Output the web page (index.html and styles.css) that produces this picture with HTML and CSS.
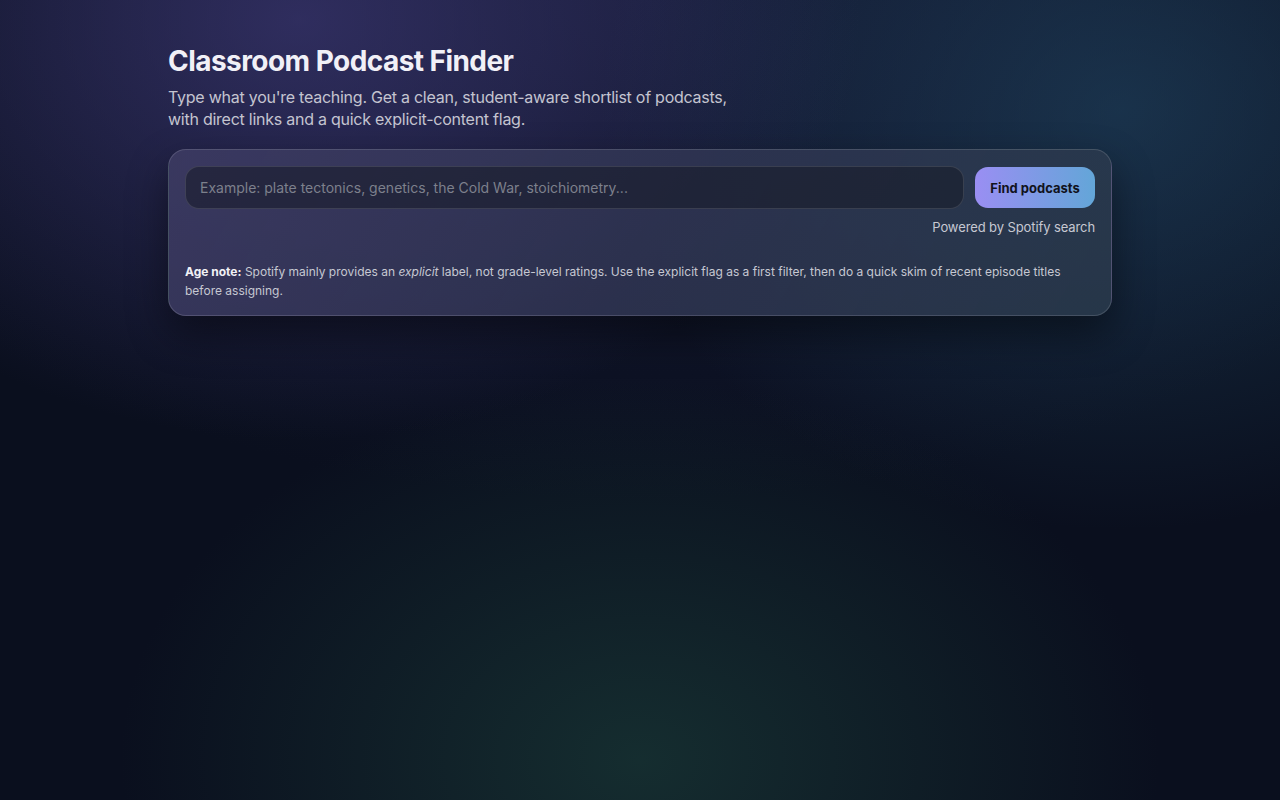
FILE: index.html
```html
<!DOCTYPE html>
<html lang="en">
<head>
<meta charset="utf-8">
<title>Classroom Podcast Finder</title>
<link rel="stylesheet" href="styles.css">
</head>
<body>
<main class="wrap">
  <header class="head">
    <h1 class="title">Classroom Podcast Finder</h1>
    <p class="sub">Type what you're teaching. Get a clean, student-aware shortlist of podcasts, with direct links and a quick explicit-content flag.</p>
  </header>
  <section class="card">
    <form class="row" onsubmit="return false">
      <input class="input" type="text" placeholder="Example: plate tectonics, genetics, the Cold War, stoichiometry...">
      <button class="btn" type="submit">Find podcasts</button>
    </form>
    <div class="powered">Powered by Spotify search</div>
    <p class="note"><strong>Age note:</strong> Spotify mainly provides an <em>explicit</em> label, not grade-level ratings. Use the explicit flag as a first filter, then do a quick skim of recent episode titles before assigning.</p>
  </section>
</main>
</body>
</html>
```
FILE: styles.css
```css
* { box-sizing: border-box; }
html, body { height: 100%; }
body {
  margin: 0;
  min-height: 100vh;
  font-family: Inter, "Noto Sans", "Liberation Sans", sans-serif;
  color: #e8e8f0;
  background-color: #0a0f1e;
  background-image:
    radial-gradient(ellipse 560px 420px at 300px 20px, rgba(60, 55, 115, 0.7), rgba(60, 55, 115, 0) 100%),
    radial-gradient(ellipse 520px 420px at 1120px 110px, rgba(32, 70, 98, 0.6), rgba(32, 70, 98, 0) 100%),
    radial-gradient(ellipse 520px 380px at 640px 760px, rgba(30, 70, 62, 0.55), rgba(30, 70, 62, 0) 100%),
    radial-gradient(ellipse 900px 500px at 640px 0px, rgba(30, 35, 70, 0.6), rgba(30, 35, 70, 0) 100%);
}
.wrap {
  width: 944px;
  margin: 0 auto;
  padding-top: 44px;
}
.head { margin-bottom: 19px; }
.title {
  margin: 0;
  font-size: 28px;
  line-height: 34px;
  font-weight: 700;
  letter-spacing: -0.55px;
  color: #f1f0f7;
}
.sub {
  margin: 8px 0 0;
  max-width: 575px;
  font-size: 16px;
  line-height: 22px;
  letter-spacing: -0.25px;
  color: #c4c4d0;
}
.card {
  border: 1px solid rgba(255, 255, 255, 0.14);
  border-radius: 18px;
  padding: 16px 16px 15px;
  background: linear-gradient(120deg, rgba(62, 60, 100, 0.85) 0%, rgba(50, 55, 85, 0.8) 50%, rgba(42, 58, 76, 0.85) 100%);
  box-shadow: 0 18px 40px rgba(0, 0, 0, 0.45);
}
.row {
  display: flex;
  gap: 11px;
  align-items: center;
  margin: 0;
}
.input {
  flex: 1;
  height: 43px;
  border-radius: 14px;
  border: 1px solid rgba(255, 255, 255, 0.12);
  background: rgba(22, 26, 38, 0.55);
  padding: 0 14px;
  font-family: inherit;
  font-size: 14px;
  color: #e8e8f0;
  outline: none;
}
.input::placeholder { color: #7d808c; }
.btn {
  width: 120px;
  height: 41px;
  border: 0;
  border-radius: 13px;
  background: linear-gradient(90deg, #9a8ef3 0%, #63a6d8 100%);
  font-family: inherit;
  font-size: 13px;
  font-weight: 700;
  color: #11131d;
  cursor: pointer;
}
.powered {
  margin-top: 10px;
  text-align: right;
  font-size: 13px;
  line-height: 16px;
  letter-spacing: -0.1px;
  color: #c6c8d2;
}
.note {
  margin: 27px 0 0;
  font-size: 12px;
  line-height: 19px;
  color: #c6c8d2;
}
.note strong { color: #f1f1f6; font-weight: 700; }
```
